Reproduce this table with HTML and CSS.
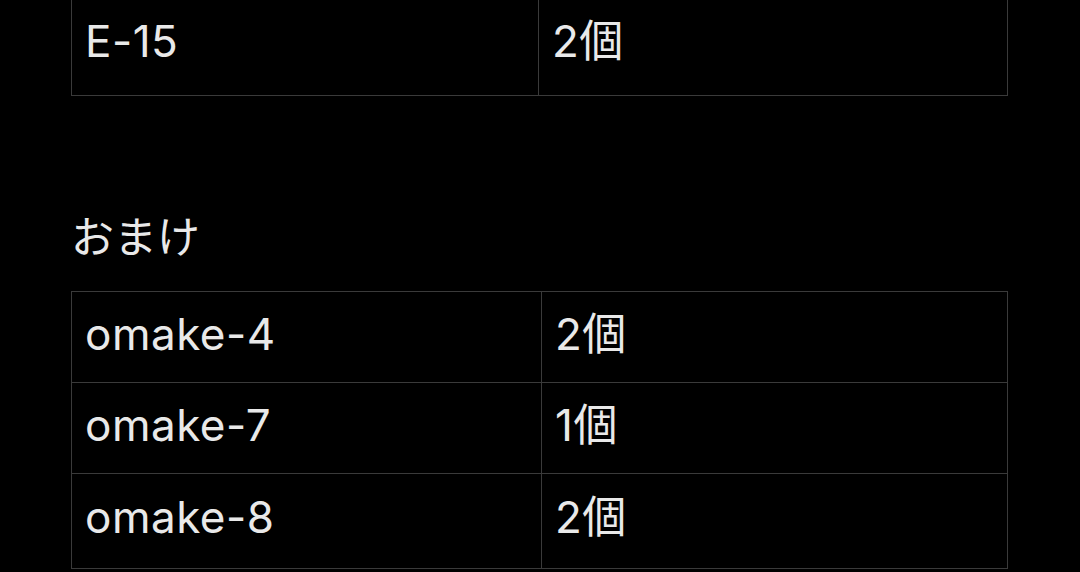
FILE: index.html
```html
<!DOCTYPE html>
<html lang="ja">
<head>
<meta charset="utf-8">
<link rel="stylesheet" href="styles.css">
</head>
<body>
<main class="page">
  <table class="grid grid-top">
    <colgroup><col class="c1a"><col></colgroup>
    <tbody>
      <tr><td>E-15</td><td>2個</td></tr>
    </tbody>
  </table>
  <h2 class="section-title">おまけ</h2>
  <table class="grid">
    <colgroup><col class="c1b"><col></colgroup>
    <tbody>
      <tr><td>omake-4</td><td>2個</td></tr>
      <tr><td>omake-7</td><td>1個</td></tr>
      <tr class="last"><td>omake-8</td><td>2個</td></tr>
    </tbody>
  </table>
</main>
</body>
</html>
```

FILE: styles.css
```css
html, body {
  margin: 0;
  padding: 0;
  background: #000;
  height: 572px;
  overflow: hidden;
}
.page {
  padding: 0 72px 0 71px;
  color: #e9e9e9;
  font-family: "Inter", "Noto Sans CJK JP", sans-serif;
  font-size: 44px;
  letter-spacing: 0.5px;
}
.grid {
  width: 937px;
  border-collapse: collapse;
  table-layout: fixed;
}
.grid td {
  border: 1px solid #3a3a3a;
  padding: 0 14px 6px 13px;
  height: 84px;
  vertical-align: middle;
  line-height: 1;
}
.grid td + td {
  padding-left: 13px;
}
.grid .last td {
  height: 86px;
  padding-bottom: 8px;
}
.grid-top {
  margin-top: -1px;
}
.grid-top td {
  height: 82px;
  padding-bottom: 13px;
}
.c1a { width: 467px; }
.c1b { width: 470px; }
.section-title {
  margin: 117px 0 35px 0;
  font-weight: 400;
  font-size: 43px;
  letter-spacing: 0;
  line-height: 1;
  font-family: "Noto Sans CJK JP", sans-serif;
}
```
